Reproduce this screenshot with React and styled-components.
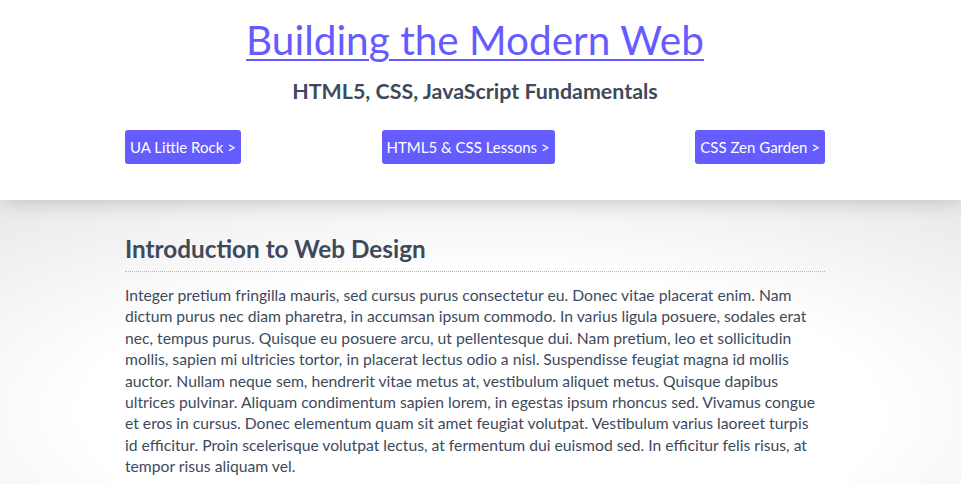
import React from 'react'
import styled, { createGlobalStyle } from 'styled-components'

const GlobalStyle = createGlobalStyle`
  html, body {
    margin: 0;
    padding: 0;
  }
  body {
    font-family: Lato, "Open Sans", sans-serif;
    color: #3d4a5c;
    background: #fff;
  }
`

const links = [
  { label: 'UA Little Rock >', href: '#ualr' },
  { label: 'HTML5 & CSS Lessons >', href: '#lessons' },
  { label: 'CSS Zen Garden >', href: '#zen' },
]

function App() {
  return (
    <>
      <GlobalStyle />
      <Header>
        <Title><a href="#top">Building the Modern Web</a></Title>
        <Subtitle>HTML5, CSS, JavaScript Fundamentals</Subtitle>
        <Nav>
          {links.map((l) => (
            <NavButton key={l.label} href={l.href}>{l.label}</NavButton>
          ))}
        </Nav>
      </Header>
      <Main>
        <Section>
          <SectionTitle>Introduction to Web Design</SectionTitle>
          <Text>
            Integer pretium fringilla mauris, sed cursus purus consectetur eu. Donec vitae placerat enim. Nam
            dictum purus nec diam pharetra, in accumsan ipsum commodo. In varius ligula posuere, sodales erat
            nec, tempus purus. Quisque eu posuere arcu, ut pellentesque dui. Nam pretium, leo et sollicitudin
            mollis, sapien mi ultricies tortor, in placerat lectus odio a nisl. Suspendisse feugiat magna id mollis
            auctor. Nullam neque sem, hendrerit vitae metus at, vestibulum aliquet metus. Quisque dapibus
            ultrices pulvinar. Aliquam condimentum sapien lorem, in egestas ipsum rhoncus sed. Vivamus congue
            et eros in cursus. Donec elementum quam sit amet feugiat volutpat. Vestibulum varius laoreet turpis
            id efficitur. Proin scelerisque volutpat lectus, at fermentum dui euismod sed. In efficitur felis risus, at
            tempor risus aliquam vel.
          </Text>
        </Section>
      </Main>
    </>
  )
}

export default App

// the page is laid out as if 11px narrower (scrollbar gutter in the original)
const Header = styled.header`
  position: relative;
  z-index: 1;
  background: #fff;
  height: 200px;
  box-sizing: border-box;
  padding: 16px 11px 0 0;
  box-shadow: 0 2px 18px rgba(0, 0, 0, 0.18);
  text-align: center;
`

const Title = styled.h1`
  margin: 0;
  font-size: 40.5px;
  line-height: 48px;
  font-weight: 400;

  a {
    color: #655cff;
    text-decoration: underline;
    text-decoration-thickness: 2px;
    text-underline-offset: 4px;
  }
`

const Subtitle = styled.h2`
  margin: 14px 0 0;
  font-size: 21.4px;
  line-height: 26px;
  font-weight: 700;
  color: #3d4a5c;
`

const Nav = styled.nav`
  width: 700px;
  margin: 26px auto 0;
  display: flex;
  justify-content: space-between;
`

const NavButton = styled.a`
  display: inline-block;
  background: #655cff;
  color: #fff;
  font-size: 15px;
  line-height: 34px;
  padding: 0 5px;
  border-radius: 3px;
  text-decoration: none;
`

const Main = styled.main`
  min-height: 284px;
  padding-right: 11px;
  background: radial-gradient(ellipse 75% 90% at 50% 75%, #fff 55%, #ebebeb 100%);
`

const Section = styled.section`
  width: 700px;
  margin: 0 auto;
  padding-top: 34px;
`

const SectionTitle = styled.h2`
  margin: 0;
  padding-bottom: 7px;
  font-size: 24.3px;
  line-height: 30px;
  font-weight: 700;
  color: #3d4a5c;
  border-bottom: 1px dotted #b8b8b8;
`

const Text = styled.p`
  margin: 13px 0 0;
  font-size: 15.7px;
  line-height: 21.4px;
  color: #3d4a5c;
`
